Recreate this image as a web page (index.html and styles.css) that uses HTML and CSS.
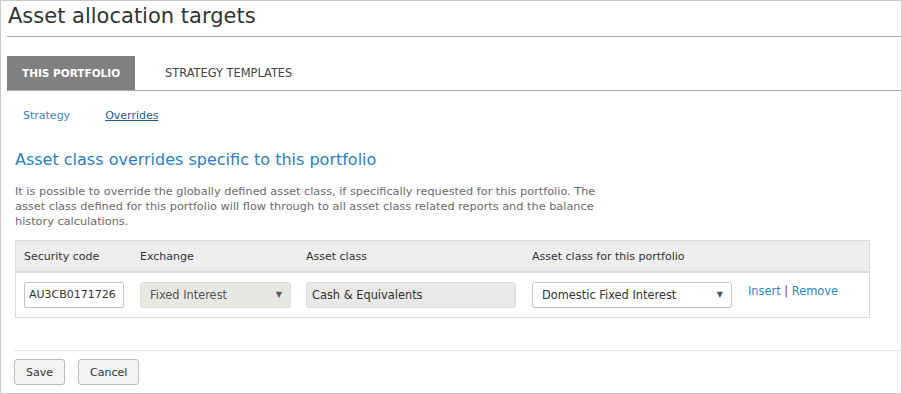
FILE: index.html
```html
<!DOCTYPE html>
<html lang="en">
<head>
  <meta charset="UTF-8">
  <title>Asset allocation targets</title>
  <link rel="stylesheet" href="styles.css">
</head>
<body>

<div class="page">
  <h1 class="title">Asset allocation targets</h1>

  <div class="tabs">
    <span class="tab active">THIS PORTFOLIO</span>
    <span class="tab">STRATEGY TEMPLATES</span>
  </div>

  <div class="subtabs">
    <a class="subtab">Strategy</a>
    <a class="subtab current">Overrides</a>
  </div>

  <div class="content">
    <h2>Asset class overrides specific to this portfolio</h2>
    <p class="intro">It is possible to override the globally defined asset class, if specifically requested for this portfolio. The asset class defined for this portfolio will flow through to all asset class related reports and the balance history calculations.</p>

    <table class="overrides">
      <thead>
        <tr>
          <th class="col-code">Security code</th>
          <th class="col-exch">Exchange</th>
          <th class="col-class">Asset class</th>
          <th class="col-port">Asset class for this portfolio</th>
          <th></th>
        </tr>
      </thead>
      <tbody>
        <tr>
          <td><div class="field code">AU3CB0171726</div></td>
          <td><div class="field select disabled">Fixed Interest<span class="arrow">▼</span></div></td>
          <td><div class="field readonly">Cash &amp; Equivalents</div></td>
          <td><div class="field select">Domestic Fixed Interest<span class="arrow">▼</span></div></td>
          <td class="actions"><div class="links"><a>Insert</a> <span class="sep">|</span> <a>Remove</a></div></td>
        </tr>
      </tbody>
    </table>
  </div>

  <div class="footer">
    <button class="btn">Save</button>
    <button class="btn">Cancel</button>
  </div>
</div>

</body>
</html>
```

FILE: styles.css
```css
body {
  margin: 0;
  background: #fff;
  color: #333;
  font-family: "DejaVu Sans", Verdana, sans-serif;
  font-size: 11px;
}
.page {
  width: 894px;
  height: 392px;
  border: 1px solid #c8c8c8;
  padding-left: 6px;
}
.title {
  margin: 0;
  height: 35px;
  padding-left: 1px;
  font-size: 21px;
  font-weight: normal;
  line-height: 31px;
  color: #333;
  border-bottom: 1px solid #a8a8a8;
}
.tabs {
  display: flex;
  margin-top: 19px;
  border-bottom: 1px solid #a8a8a8;
}
.tab {
  height: 34px;
  line-height: 34px;
  padding: 0 15px;
  font-size: 11.4px;
  color: #444;
}
.tab + .tab {
  padding-left: 30px;
}
.tab.active {
  width: 98px;
  background: #808080;
  color: #fff;
  font-weight: bold;
  font-size: 10.5px;
  white-space: nowrap;
}
.subtabs {
  display: flex;
  gap: 35px;
  padding: 18px 0 0 16px;
  height: 23px;
}
.subtab {
  color: #3a83c4;
  font-size: 11px;
}
.subtab.current {
  color: #1c5e8e;
  text-decoration: underline;
}
.content {
  padding-left: 8px;
  height: 218px;
}
.content h2 {
  margin: 0;
  padding-top: 18px;
  font-size: 16px;
  font-weight: normal;
  color: #2a7fc4;
  line-height: 20px;
}
.intro {
  margin: 14px 0 0;
  width: 600px;
  font-size: 11.3px;
  line-height: 15px;
  color: #6a6a6a;
}
.overrides {
  margin-top: 11px;
  width: 855px;
  border-collapse: collapse;
  border: 1px solid #dcdcdc;
}
.overrides th {
  background: #eeeeee;
  border-bottom: 2px solid #dcdcdc;
  height: 30px;
  text-align: left;
  font-weight: normal;
  color: #333;
  padding: 0 0 0 8px;
}
.overrides td {
  height: 44px;
  padding: 0 0 0 8px;
  vertical-align: middle;
}
.col-code { width: 108px; }
.col-exch { width: 158px; }
.col-class { width: 218px; }
.col-port { width: 208px; }
.field {
  box-sizing: border-box;
  height: 26px;
  line-height: 24px;
  border: 1px solid #c4c4c4;
  border-radius: 3px;
  padding: 0 9px;
  color: #333;
  font-size: 11.4px;
  position: relative;
}
.field.code {
  width: 100px;
  padding: 0 4px;
  border-radius: 2px;
  font-size: 11px;
}
.field.select.disabled {
  width: 151px;
  background: #e8e8e3;
  border-color: #dcdcd6;
  color: #555;
}
.field.readonly {
  width: 210px;
  background: #e8e8e8;
  border-color: #dadada;
  padding: 0 5px;
}
.field.select {
  width: 200px;
}
.arrow {
  position: absolute;
  right: 8px;
  top: 0;
  font-size: 8px;
  color: #555;
}
.overrides td.actions {
  vertical-align: top;
}
.links {
  padding-top: 11px;
  font-size: 11.4px;
  color: #2a8ad0;
}
.links a {
  color: #2a8ad0;
}
.links .sep {
  color: #8a2a8a;
}
.footer {
  display: flex;
  gap: 13px;
  margin-left: 7px;
  padding-top: 8px;
  border-top: 1px solid #e2e2e2;
}
.btn {
  font-family: "DejaVu Sans", Verdana, sans-serif;
  font-size: 11px;
  color: #333;
  height: 26px;
  padding: 0 11px;
  background: #f4f4f4;
  border: 1px solid #bcbcbc;
  border-radius: 3px;
}
```
